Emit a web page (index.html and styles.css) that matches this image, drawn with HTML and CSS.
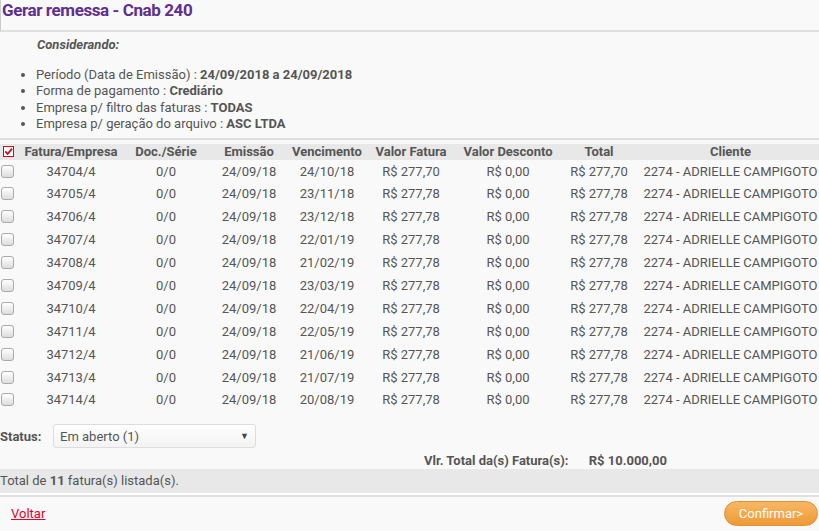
FILE: index.html
```html
<!DOCTYPE HTML>
<html lang="pt-BR">
	<head>
		<meta charset="UTF-8">
		<title>Gerar remessa - Cnab 240</title>
		<link rel="stylesheet" href="styles.css">
	</head>
	<body>
		<div class="titlebox">
			<h1 class="title">Gerar remessa - Cnab 240</h1>
		</div>
		<div class="info">
			<p class="considerando">Considerando:</p>
			<ul class="filters">
				<li>Período (Data de Emissão) : <b>24/09/2018 a 24/09/2018</b></li>
				<li>Forma de pagamento : <b>Crediário</b></li>
				<li>Empresa p/ filtro das faturas : <b>TODAS</b></li>
				<li>Empresa p/ geração do arquivo : <b>ASC LTDA</b></li>
			</ul>
		</div>
		<table class="grid">
			<thead>
				<tr>
					<th class="chk">
						<svg width="11" height="11" viewBox="0 0 11 11">
							<rect x="0.5" y="0.5" width="10" height="10" fill="#fff" stroke="#e0001a"/>
							<path d="M2.2 5.4 L4.6 8 L9 2.6" fill="none" stroke="#e0001a" stroke-width="1.8"/>
						</svg>
					</th>
					<th class="c1">Fatura/Empresa</th>
					<th class="c2">Doc./Série</th>
					<th class="c3">Emissão</th>
					<th class="c4">Vencimento</th>
					<th class="c5">Valor Fatura</th>
					<th class="c6">Valor Desconto</th>
					<th class="c7">Total</th>
					<th class="c8">Cliente</th>
				</tr>
			</thead>
			<tbody>
				<tr><td class="chk"><input type="checkbox" class="box"></td><td>34704/4</td><td>0/0</td><td>24/09/18</td><td>24/10/18</td><td>R$ 277,70</td><td>R$ 0,00</td><td>R$ 277,70</td><td>2274 - ADRIELLE CAMPIGOTO</td></tr>
				<tr><td class="chk"><input type="checkbox" class="box"></td><td>34705/4</td><td>0/0</td><td>24/09/18</td><td>23/11/18</td><td>R$ 277,78</td><td>R$ 0,00</td><td>R$ 277,78</td><td>2274 - ADRIELLE CAMPIGOTO</td></tr>
				<tr><td class="chk"><input type="checkbox" class="box"></td><td>34706/4</td><td>0/0</td><td>24/09/18</td><td>23/12/18</td><td>R$ 277,78</td><td>R$ 0,00</td><td>R$ 277,78</td><td>2274 - ADRIELLE CAMPIGOTO</td></tr>
				<tr><td class="chk"><input type="checkbox" class="box"></td><td>34707/4</td><td>0/0</td><td>24/09/18</td><td>22/01/19</td><td>R$ 277,78</td><td>R$ 0,00</td><td>R$ 277,78</td><td>2274 - ADRIELLE CAMPIGOTO</td></tr>
				<tr><td class="chk"><input type="checkbox" class="box"></td><td>34708/4</td><td>0/0</td><td>24/09/18</td><td>21/02/19</td><td>R$ 277,78</td><td>R$ 0,00</td><td>R$ 277,78</td><td>2274 - ADRIELLE CAMPIGOTO</td></tr>
				<tr><td class="chk"><input type="checkbox" class="box"></td><td>34709/4</td><td>0/0</td><td>24/09/18</td><td>23/03/19</td><td>R$ 277,78</td><td>R$ 0,00</td><td>R$ 277,78</td><td>2274 - ADRIELLE CAMPIGOTO</td></tr>
				<tr><td class="chk"><input type="checkbox" class="box"></td><td>34710/4</td><td>0/0</td><td>24/09/18</td><td>22/04/19</td><td>R$ 277,78</td><td>R$ 0,00</td><td>R$ 277,78</td><td>2274 - ADRIELLE CAMPIGOTO</td></tr>
				<tr><td class="chk"><input type="checkbox" class="box"></td><td>34711/4</td><td>0/0</td><td>24/09/18</td><td>22/05/19</td><td>R$ 277,78</td><td>R$ 0,00</td><td>R$ 277,78</td><td>2274 - ADRIELLE CAMPIGOTO</td></tr>
				<tr><td class="chk"><input type="checkbox" class="box"></td><td>34712/4</td><td>0/0</td><td>24/09/18</td><td>21/06/19</td><td>R$ 277,78</td><td>R$ 0,00</td><td>R$ 277,78</td><td>2274 - ADRIELLE CAMPIGOTO</td></tr>
				<tr><td class="chk"><input type="checkbox" class="box"></td><td>34713/4</td><td>0/0</td><td>24/09/18</td><td>21/07/19</td><td>R$ 277,78</td><td>R$ 0,00</td><td>R$ 277,78</td><td>2274 - ADRIELLE CAMPIGOTO</td></tr>
				<tr><td class="chk"><input type="checkbox" class="box"></td><td>34714/4</td><td>0/0</td><td>24/09/18</td><td>20/08/19</td><td>R$ 277,78</td><td>R$ 0,00</td><td>R$ 277,78</td><td>2274 - ADRIELLE CAMPIGOTO</td></tr>
			</tbody>
		</table>
		<div class="status">
			<label class="status-label">Status:</label>
			<div class="select">
				<span>Em aberto (1)</span>
				<span class="arrow">&#9660;</span>
			</div>
		</div>
		<div class="sum">
			<span class="sum-label">Vlr. Total da(s) Fatura(s):</span>
			<span class="sum-value">R$ 10.000,00</span>
		</div>
		<div class="count">Total de <b>11</b> fatura(s) listada(s).</div>
		<div class="actions">
			<a href="#" class="back">Voltar</a>
			<button class="confirm">Confirmar&gt;</button>
		</div>
	</body>
</html>
```

FILE: styles.css
```css
body {
	margin: 0;
	background: #f9f9f9;
	font-family: Roboto, "Liberation Sans", sans-serif;
	font-size: 13px;
	color: #555;
	white-space: nowrap;
}
.titlebox {
	height: 30px;
	border-left: 1px solid #ccc;
	border-bottom: 2px solid #e0e0e0;
}
.title {
	margin: 0;
	padding: 0 0 0 1px;
	font-size: 17px;
	line-height: 20px;
	color: #5e2e91;
	font-weight: bold;
	letter-spacing: -0.4px;
}
.info {
	border-bottom: 2px solid #e0e0e0;
	padding: 4px 0 5px 0;
}
.considerando {
	margin: 0 0 0 37px;
	font-weight: bold;
	font-style: italic;
	line-height: 18px;
}
.filters {
	margin: 13px 0 0 0;
	padding-left: 36px;
	line-height: 16.4px;
}
.grid {
	border-collapse: collapse;
	margin-top: 4px;
	table-layout: fixed;
	width: 819px;
}
.grid th {
	background: #e8e8e8;
	height: 16px;
	padding: 0;
	line-height: 16px;
	font-weight: bold;
	text-align: center;
}
.grid td {
	padding: 0;
	height: 22.9px;
	text-align: center;
}
.chk { width: 16px; text-align: left !important; }
.grid th.chk svg { display: block; margin: 0 0 0 3px; }
.c1 { width: 110px; }
.c2 { width: 80px; }
.c3 { width: 86px; }
.c4 { width: 70px; }
.c5 { width: 98px; }
.c6 { width: 96px; }
.c7 { width: 86px; }
.box {
	-webkit-appearance: none;
	appearance: none;
	display: block;
	width: 13px;
	height: 13px;
	margin: 0 0 0 1px;
	border: 1px solid #aaa;
	border-radius: 3px;
	background: linear-gradient(#fff, #ddd);
}
.status {
	display: flex;
	align-items: center;
	margin-top: 13px;
}
.status-label {
	font-weight: bold;
	width: 53px;
}
.select {
	display: flex;
	justify-content: space-between;
	align-items: center;
	width: 189px;
	height: 22px;
	padding: 0 6px;
	border: 1px solid #ddd;
	border-radius: 3px;
	background: linear-gradient(#fff, #f3f3f3);
}
.arrow {
	font-size: 9px;
	color: #444;
}
.sum {
	margin: 5px 0 0 424px;
	font-weight: bold;
	line-height: 16px;
}
.sum-value {
	margin-left: 17px;
}
.count {
	background: #e8e8e8;
	height: 24px;
	line-height: 24px;
	border-bottom: 2px solid #fff;
}
.actions {
	display: flex;
	justify-content: space-between;
	align-items: center;
	border-top: 2px solid #e0e0e0;
	padding: 4px 1px 2px 11px;
}
.back {
	color: #e60026;
}
.confirm {
	height: 25px;
	width: 94px;
	border: 1px solid #e0902f;
	border-radius: 13px;
	background: linear-gradient(#f8b764, #ee9a35);
	color: #fff;
	font-family: inherit;
	font-size: 13px;
	padding: 0;
}
```
